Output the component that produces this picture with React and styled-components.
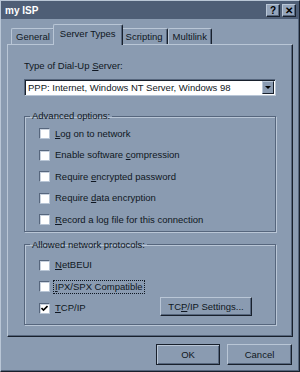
import styled, { createGlobalStyle } from 'styled-components';

const FACE = '#8a9bb1';
const LIGHT = '#b9c6d6';
const SHADOW = '#56667d';
const DARK = '#18202c';
const TEXT = '#0f1722';

const GlobalStyle = createGlobalStyle`
  html, body {
    margin: 0;
    padding: 0;
    background: ${FACE};
  }
  body {
    font-family: "Liberation Sans", Arial, sans-serif;
    font-size: 9.5px;
    color: ${TEXT};
  }
`

const Window = styled.div`
  width: 300px;
  height: 372px;
  box-sizing: border-box;
  padding: 2px;
  background: ${FACE};
  border-left: 1px solid ${LIGHT};
  border-top: 1px solid ${LIGHT};
  border-right: 1px solid ${DARK};
  border-bottom: 1px solid ${DARK};
  box-shadow: inset -1px -1px 0 ${SHADOW};
  display: flex;
  flex-direction: column;
`

const TitleBar = styled.div`
  height: 17px;
  margin: -2px -2px 0 -2px;
  padding: 1px 3px 0 4px;
  background: #4e5e76;
  display: flex;
  align-items: center;
  justify-content: space-between;
`

const Title = styled.span`
  color: #ffffff;
  font-weight: bold;
  font-size: 10px;
`

const TitleButtons = styled.div`
  display: flex;
  gap: 2px;
`

const TitleButton = styled.div`
  width: 14px;
  height: 13px;
  box-sizing: border-box;
  background: #95a5bb;
  border-left: 1px solid ${LIGHT};
  border-top: 1px solid ${LIGHT};
  border-right: 1px solid ${DARK};
  border-bottom: 1px solid ${DARK};
  box-shadow: inset -1px -1px 0 ${SHADOW};
  display: flex;
  align-items: center;
  justify-content: center;
  font-weight: bold;
  font-size: 10px;
  line-height: 1;
  color: #000;
`

const TabRow = styled.div`
  display: flex;
  align-items: flex-end;
  height: 19px;
  margin: 6px 0 0 6px;
  padding-left: 2px;
`

const Tab = styled.div`
  position: relative;
  box-sizing: border-box;
  height: ${p => (p.$active ? '21px' : '16px')};
  margin: ${p => (p.$active ? '0 -2px -1px -2px' : '0')};
  z-index: ${p => (p.$active ? 1 : 0)};
  padding: ${p => (p.$active ? '3px 6px 0' : '2px 4px 0')};
  background: ${FACE};
  border-left: 1px solid ${LIGHT};
  border-top: 1px solid ${LIGHT};
  border-right: 1px solid ${DARK};
  border-radius: 2px 2px 0 0;
  box-shadow: inset -1px 0 0 ${SHADOW};
  white-space: nowrap;
`

const Panel = styled.div`
  box-sizing: border-box;
  height: 293px;
  margin: 0 4px;
  padding: 15px 16px 0 16px;
  border-left: 1px solid ${LIGHT};
  border-top: 1px solid ${LIGHT};
  border-right: 1px solid ${DARK};
  border-bottom: 1px solid ${DARK};
  box-shadow: inset -1px -1px 0 ${SHADOW};
`

const FieldLabel = styled.div`
  line-height: 12px;
`

const Key = styled.span`
  text-decoration: underline;
  text-underline-offset: 1px;
`

const Select = styled.div`
  margin-top: 7px;
  height: 17px;
  box-sizing: border-box;
  background: #ffffff;
  border-left: 1px solid ${SHADOW};
  border-top: 1px solid ${SHADOW};
  border-right: 1px solid ${LIGHT};
  border-bottom: 1px solid ${LIGHT};
  box-shadow: inset 1px 1px 0 ${DARK};
  display: flex;
  align-items: stretch;
  padding: 1px 1px 1px 2px;
`

const SelectValue = styled.div`
  flex: 1;
  display: flex;
  align-items: center;
  padding-left: 1px;
`

const SelectArrow = styled.div`
  width: 12px;
  box-sizing: border-box;
  background: ${FACE};
  border-left: 1px solid ${LIGHT};
  border-top: 1px solid ${LIGHT};
  border-right: 1px solid ${DARK};
  border-bottom: 1px solid ${DARK};
  display: flex;
  align-items: center;
  justify-content: center;

  &::after {
    content: '';
    border-left: 3px solid transparent;
    border-right: 3px solid transparent;
    border-top: 3px solid #000;
  }
`

const Group = styled.fieldset`
  margin: ${p => p.$top} 0 0 0;
  padding: ${p => p.$pad} 0 ${p => p.$bottom} 14px;
  border: 1px solid ${SHADOW};
  box-shadow: inset 1px 1px 0 ${LIGHT}, 1px 1px 0 ${LIGHT};
  min-width: 0;
`

const Legend = styled.legend`
  margin-left: -9px;
  padding: 0 2px;
  line-height: 12px;
`

const Row = styled.div`
  display: flex;
  align-items: center;
  height: 21.5px;
`

const Box = styled.div`
  width: 11px;
  height: 11px;
  box-sizing: border-box;
  background: #ffffff;
  border-left: 1px solid ${SHADOW};
  border-top: 1px solid ${SHADOW};
  border-right: 1px solid ${LIGHT};
  border-bottom: 1px solid ${LIGHT};
  box-shadow: inset 1px 1px 0 #c9d2de;
  display: flex;
  align-items: center;
  justify-content: center;
  flex: none;
`

const CheckText = styled.span`
  margin-left: 4px;
  padding: 0 1px;
  line-height: 12px;
  outline: ${p => (p.$focus ? `1px dotted ${TEXT}` : 'none')};
`

const Button = styled.div`
  box-sizing: border-box;
  width: ${p => p.$w};
  height: ${p => p.$h};
  background: ${FACE};
  border-left: 1px solid ${p => (p.$default ? DARK : LIGHT)};
  border-top: 1px solid ${p => (p.$default ? DARK : LIGHT)};
  border-right: 1px solid ${DARK};
  border-bottom: 1px solid ${DARK};
  box-shadow: ${p => (p.$default
    ? `inset 1px 1px 0 ${LIGHT}, inset -1px -1px 0 ${SHADOW}`
    : `inset -1px -1px 0 ${SHADOW}`)};
  display: flex;
  align-items: center;
  justify-content: center;
  flex: none;
`

const SettingsButton = styled(Button)`
  margin: 0 23px 4px auto;
`

const Footer = styled.div`
  display: flex;
  justify-content: flex-end;
  gap: 7px;
  margin-top: 7px;
  padding-right: 5px;
`

function Check({ checked, children, focus }) {
  return (
    <Row>
      <Box>
        {checked && (
          <svg width="7" height="7" viewBox="0 0 7 7">
            <path d="M0.5 3 L2.5 5 L6.5 1" stroke="#000" strokeWidth="1.6" fill="none" />
          </svg>
        )}
      </Box>
      <CheckText $focus={focus}>{children}</CheckText>
    </Row>
  )
}

export default function App() {
  return (
    <>
      <GlobalStyle />
      <Window>
        <TitleBar>
          <Title>my ISP</Title>
          <TitleButtons>
            <TitleButton>?</TitleButton>
            <TitleButton>✕</TitleButton>
          </TitleButtons>
        </TitleBar>

        <TabRow>
          <Tab>General</Tab>
          <Tab $active>Server Types</Tab>
          <Tab>Scripting</Tab>
          <Tab>Multilink</Tab>
        </TabRow>

        <Panel>
          <FieldLabel>Type of Dial-Up <Key>S</Key>erver:</FieldLabel>
          <Select>
            <SelectValue>PPP: Internet, Windows NT Server, Windows 98</SelectValue>
            <SelectArrow />
          </Select>

          <Group $top="14px" $pad="1px" $bottom="0px">
            <Legend>Advanced options:</Legend>
            <Check><Key>L</Key>og on to network</Check>
            <Check>Enable software <Key>c</Key>ompression</Check>
            <Check>Require <Key>e</Key>ncrypted password</Check>
            <Check>Require <Key>d</Key>ata encryption</Check>
            <Check><Key>R</Key>ecord a log file for this connection</Check>
          </Group>

          <Group $top="7px" $pad="4px" $bottom="5px">
            <Legend>Allowed network protocols:</Legend>
            <Check><Key>N</Key>etBEUI</Check>
            <Check focus><Key>I</Key>PX/SPX Compatible</Check>
            <Row>
              <Check checked><Key>T</Key>CP/IP</Check>
              <SettingsButton $w="92px" $h="19px">TC<Key>P</Key>/IP Settings...</SettingsButton>
            </Row>
          </Group>
        </Panel>

        <Footer>
          <Button $w="64px" $h="21px" $default>OK</Button>
          <Button $w="65px" $h="21px">Cancel</Button>
        </Footer>
      </Window>
    </>
  )
}
